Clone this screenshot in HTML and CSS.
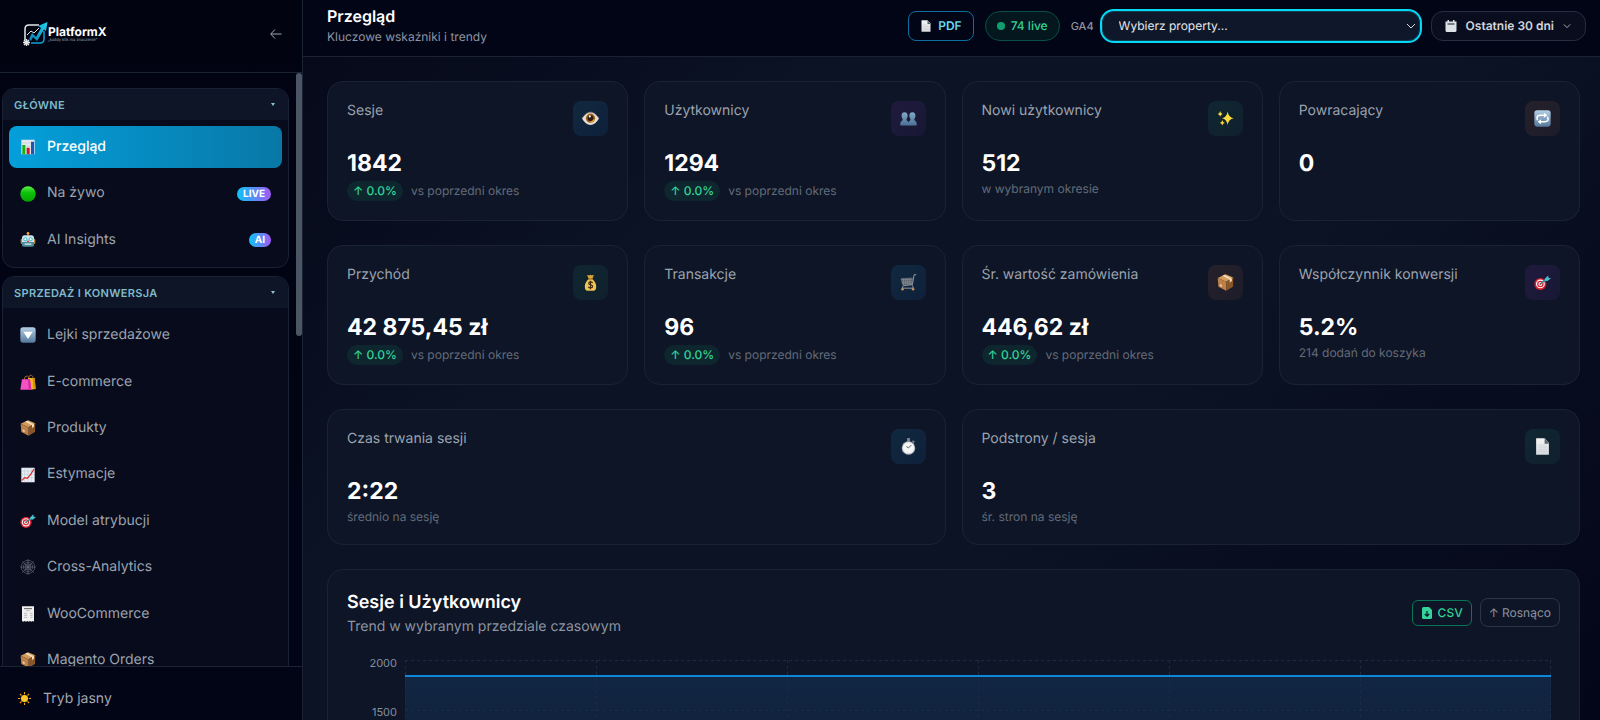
FILE: index.html
```html
<!DOCTYPE html>
<html lang="pl">
<head>
  <meta charset="UTF-8" />
  <meta name="viewport" content="width=device-width, initial-scale=1.0"/>
  <title>PlatformX - Przegląd</title>
  <link rel="stylesheet" href="styles.css">
</head>
<body>

  <!-- ikony -->
  <svg class="sprite" aria-hidden="true">
    <defs>
      <linearGradient id="g-blue" x1="0" y1="0" x2="0" y2="1"><stop offset="0" stop-color="#b4cfe6"/><stop offset="1" stop-color="#54789c"/></linearGradient>
      <linearGradient id="g-green" x1="0" y1="0" x2="0" y2="1"><stop offset="0" stop-color="#5df04a"/><stop offset=".4" stop-color="#0cc40a"/><stop offset="1" stop-color="#04a304"/></linearGradient>
      <linearGradient id="g-bust" x1="0" y1="0" x2="0" y2="1"><stop offset="0" stop-color="#86a9c8"/><stop offset="1" stop-color="#4a7096"/></linearGradient>
      <linearGradient id="g-paper" x1="0" y1="0" x2="0" y2="1"><stop offset="0" stop-color="#f4f4f4"/><stop offset="1" stop-color="#d6dade"/></linearGradient>
      <linearGradient id="g-cyan" x1="0" y1="1" x2="1" y2="0"><stop offset="0" stop-color="#0a7fb8"/><stop offset="1" stop-color="#22d3ee"/></linearGradient>
      <linearGradient id="g-area" x1="0" y1="0" x2="0" y2="1"><stop offset="0" stop-color="#2a8cf0" stop-opacity=".15"/><stop offset="1" stop-color="#2a8cf0" stop-opacity="0"/></linearGradient>
      <symbol id="i-chart" viewBox="0 0 24 24"><path fill="#e3e8ef" d="M2 1h20v22H2z"/><path stroke="#b9c4d0" stroke-width=".7" d="M2 6h20M2 11h20M2 16h20"/><path fill="#13b413" d="M3.500 9h4.500v14H3.500z"/><path fill="#cf1722" d="M10 13h4.500v10H10z"/><path fill="#1b55b8" d="M16.500 4H21v19h-4.500z"/></symbol>
      <symbol id="i-live" viewBox="0 0 24 24"><circle cx="12" cy="12" r="11.500" fill="url(#g-green)"/></symbol>
      <symbol id="i-robot" viewBox="0 0 24 24"><circle cx="12" cy="2" r="2" fill="#f0a83a"/><path fill="#d8793a" d="M11 3h2v4h-2z"/><rect x="1" y="10" width="22" height="8" rx="2" fill="#b8863c"/><path fill="#cfe2e8" d="M3 9q0-4 4-4h10q4 0 4 4v6H3z"/><path fill="#4b8c98" d="M3 15h18v5q0 2-3 2H6q-3 0-3-2z"/><circle cx="8" cy="11" r="3.200" fill="#52c3d6"/><circle cx="16" cy="11" r="3.200" fill="#52c3d6"/><circle cx="8" cy="11" r="1.500" fill="#fff"/><circle cx="16" cy="11" r="1.500" fill="#fff"/><path fill="#dd4438" d="M12 12l2 3h-4z"/><path fill="#b5d4d9" d="M7 17h10v2.500H7z"/></symbol>
      <symbol id="i-down" viewBox="0 0 24 24"><rect x=".5" y=".5" width="23" height="23" rx="4" fill="url(#g-blue)"/><path fill="#fff" d="M5 7h14l-7 11z"/></symbol>
      <symbol id="i-bags" viewBox="0 0 24 24"><path fill="none" stroke="#a96a2a" stroke-width="1.400" d="M13 7q0-6 4-5 3 1 3 5M6 9q1-7 5-6 3 1 3 6"/><path fill="#f5b51d" d="M12 6h10l1.500 16.500-9 1z"/><path fill="#d18c12" d="M19 6h3l1.500 16.500-3 .5z"/><path fill="#f551c4" d="M3 8h12l2 15.500H.5z"/><path fill="#d62a9f" d="M12 8h3l2 15.500h-4z"/></symbol>
      <symbol id="i-box" viewBox="0 0 24 24"><path fill="#d39a5c" d="M12 .5L23 5l-10 6L1 5.500z"/><path fill="#bd8048" d="M1 5.500l12 5.500v12.500L2 18z"/><path fill="#8a5729" d="M23 5l-10 6v12.500L22.500 18z"/><path fill="#f0d9b4" d="M7.500 2.500L18 8v4l3-2V6.500L11 1z"/><path fill="#e9d2b0" d="M4 14l3 1.500v3L4 17z"/></symbol>
      <symbol id="i-trend" viewBox="0 0 24 24"><path fill="#e8edf3" d="M2 1h20v22H2z"/><path stroke="#b4c2d0" stroke-width=".7" d="M2 6h20M2 11h20M2 16h20M7 1v22M12 1v22M17 1v22"/><path fill="none" stroke="#d62a2a" stroke-width="1.800" d="M3 20l4-4 4 1 5-6 5-8"/></symbol>
      <symbol id="i-target" viewBox="0 0 24 24"><circle cx="9" cy="14" r="8.500" fill="#d3202c"/><circle cx="9" cy="14" r="6.200" fill="#fff"/><circle cx="9" cy="14" r="4.600" fill="#d3202c"/><circle cx="9" cy="14" r="2.800" fill="#fff"/><circle cx="9" cy="14" r="1.400" fill="#d3202c"/><path stroke="#2c8ea0" stroke-width="2" d="M9 14l9-7"/><path fill="#4cc0cf" d="M15 7l5-5 .5 3.500 3.500.5-5 4-4-.5z"/></symbol>
      <symbol id="i-web" viewBox="0 0 24 24"><g fill="none" stroke="#697180" stroke-width=".9"><circle cx="12" cy="12" r="10"/><circle cx="12" cy="12" r="7"/><circle cx="12" cy="12" r="4.500"/><circle cx="12" cy="12" r="2"/><path d="M12 0v24M0 12h24M3.500 3.500l17 17M20.500 3.500l-17 17"/></g></symbol>
      <symbol id="i-receipt" viewBox="0 0 24 24"><path fill="#f1f1f1" d="M3 .5h18v23l-2-1-2 1-2-1-2 1-2-1-2 1-2-1-2 1-2-1z"/><path stroke="#555" stroke-width="1.400" d="M6 4h12"/><path stroke="#a5a5a5" d="M9 7h6M6 11h5M15 11h4M6 14h5M15 14h4M6 17h5M15 17h4"/></symbol>
      <symbol id="i-sun" viewBox="0 0 24 24"><g stroke="#f59e0b" stroke-width="2"><path d="M12 0v4M12 20v4M0 12h4M20 12h4M3.500 3.500l3 3M17.500 17.500l3 3M20.500 3.500l-3 3M6.500 17.500l-3 3"/></g><circle cx="12" cy="12" r="6.500" fill="#ffc629"/></symbol>
      <symbol id="i-eye" viewBox="0 0 24 24"><path fill="#e6dedb" d="M0 12q6-9 12-9t12 9q-5 9-12 9T0 12z"/><path fill="none" stroke="#9b7f78" d="M0 12q6-9 12-9t12 9"/><circle cx="12" cy="11.500" r="6.500" fill="#9c5f14"/><path fill="#e0a01e" d="M12 13h6a6 6 0 0 1-6 5z"/><circle cx="12" cy="11.500" r="4" fill="#2e1a12"/><circle cx="11" cy="9" r="1.500" fill="#fff"/></symbol>
      <symbol id="i-users" viewBox="0 0 24 24"><path fill="url(#g-bust)" d="M6.500 3c3 0 4.500 2.300 4.300 5.300-.2 2.500-1.300 3.700-1.600 4.700-.4 2.500 3.300 2.500 3.300 6v3H.5v-3c0-3.500 3.700-3.500 3.300-6-.3-1-1.400-2.200-1.600-4.700C2 5.300 3.500 3 6.500 3z"/><path fill="url(#g-bust)" d="M17.500 3c3 0 4.500 2.300 4.300 5.300-.2 2.500-1.300 3.700-1.600 4.700-.4 2.500 3.300 2.500 3.300 6v3h-12v-3c0-3.500 3.700-3.500 3.300-6-.3-1-1.400-2.200-1.600-4.700C13 5.300 14.500 3 17.500 3z"/></symbol>
      <symbol id="i-sparkles" viewBox="0 0 24 24"><path fill="#fbdc3c" d="M15 2q1 8 8.500 9.500Q16 13 15 21.500 14 13 7 11.500 14 10 15 2zM4.500 1.500q.5 3.500 3.500 4-3 .5-3.500 4Q4 6 1 5.500q3-.5 3.500-4zM7.500 14q.5 3.500 3.500 4-3 .5-3.500 4-.5-3.500-3.500-4 3-.5 3.500-4z"/></symbol>
      <symbol id="i-repeat" viewBox="0 0 24 24"><rect x=".5" y=".5" width="23" height="23" rx="4" fill="url(#g-blue)"/><path fill="none" stroke="#fff" stroke-width="2.200" d="M5 14.500q-3-6.500 4-7h6M19 9.500q3 6.500-4 7H9"/><path fill="#fff" d="M14 4l5 3.500-5 3.500zM10 13l-5 3.500 5 3.500z"/></symbol>
      <symbol id="i-money" viewBox="0 0 24 24"><path fill="#d9a63a" d="M7 1q3 1.500 5 0 2 1.500 5 0l-2.500 6h-5z"/><path fill="#efc452" d="M9.500 7h5q5.500 4.500 5.500 11 0 5.500-4 5.500H8q-4 0-4-5.500Q4 11.500 9.500 7z"/><path stroke="#8a5a20" stroke-width="1.500" d="M9 7h6"/><path fill="none" stroke="#3f2c12" stroke-width="1.700" d="M15 12.500q-1-1.500-3-1.500-2.500 0-2.500 2t2.700 2.300 2.800 2.400q0 2-3 2-2.200 0-3.200-1.700M12 9.500v12"/></symbol>
      <symbol id="i-cart" viewBox="0 0 24 24"><path fill="#596069" d="M1 6l17-1-1 10-14 .5z"/><path stroke="#9aa1aa" stroke-width=".6" d="M1 8h17M2 11h16M3 13h15M5 6v9M8 6v9M11 6v9M14 6v9"/><path fill="none" stroke="#929aa2" stroke-width="1.400" d="M23 1h-3l-2.500 14-13 1.500L3 20h16l-1.500-4"/><circle cx="3.500" cy="21.500" r="1.800" fill="#c58f63"/><circle cx="18.500" cy="21.500" r="1.800" fill="#c58f63"/></symbol>
      <symbol id="i-watch" viewBox="0 0 24 24"><path fill="#7d838a" d="M10 0h4v5h-4zM18 3l3 2-2 2.500-2-2z"/><circle cx="12" cy="14" r="9.500" fill="#b7bcc1"/><circle cx="12" cy="14" r="8" fill="#f5f5f5"/><path stroke="#444" stroke-width="1.200" d="M12 14l4-4M12 14L9 12"/></symbol>
      <symbol id="i-page" viewBox="0 0 24 24"><path fill="url(#g-paper)" d="M3 .5h12L21 7v16.500H3z"/><path fill="#59616a" d="M15 .5L21 8h-6z"/><path stroke="#c4c8cc" stroke-width=".8" d="M6 10h12M6 13h12M6 16h12M6 19h12"/></symbol>
      <symbol id="i-cal" viewBox="0 0 24 24"><path fill="#dde1e6" d="M5 0h3v3h8V0h3v3h4v18q0 3-3 3H4q-3 0-3-3V3h4z"/><path fill="#111827" d="M5 7h14v2H5z"/></symbol>
    </defs>
  </svg>

  <div class="layout">
    <aside class="sidebar">
      <div class="brand">
        <a class="logo" href="#">
          <svg viewBox="0 0 26 26" aria-hidden="true">
            <path fill="none" stroke="#e5e7eb" stroke-width="1.500" d="M17 4H7Q3 4 3 8v11"/>
            <path fill="none" stroke="#0fa0d6" stroke-width="1.500" d="M22 10v8q0 4-4 4H9"/>
            <path fill="none" stroke="#e5e7eb" d="M5 14l4-4 3 2 5-5"/>
            <path fill="url(#g-cyan)" d="M7 18l3-6 4 4 5-9-3-2 9.500-4L24 10l-2-1.500L15 20l-4-4-2 4z"/>
            <path stroke="#e5e7eb" stroke-width="1.400" d="M4.500 18v7M1 21.500h7M2 19l5 5M7 19l-5 5"/>
          </svg>
          <span class="logo-text"><b>PlatformX</b><small>„każdy klik ma znaczenie”</small></span>
        </a>
        <button class="collapse" aria-label="Zwiń menu"><svg viewBox="0 0 12 12"><path d="M11.500 6H1M5 1.500L.7 6 5 10.500"/></svg></button>
      </div>

      <nav class="nav">
        <section class="group">
          <button class="group-head">GŁÓWNE <i></i></button>
          <div class="group-items">
            <a class="active" href="#"><svg><use href="#i-chart"/></svg>Przegląd</a>
            <a href="#"><svg><use href="#i-live"/></svg>Na żywo <em>LIVE</em></a>
            <a href="#"><svg><use href="#i-robot"/></svg>AI Insights <em>AI</em></a>
          </div>
        </section>
        <section class="group">
          <button class="group-head">SPRZEDAŻ I KONWERSJA <i></i></button>
          <div class="group-items">
            <a href="#"><svg><use href="#i-down"/></svg>Lejki sprzedażowe</a>
            <a href="#"><svg><use href="#i-bags"/></svg>E-commerce</a>
            <a href="#"><svg><use href="#i-box"/></svg>Produkty</a>
            <a href="#"><svg><use href="#i-trend"/></svg>Estymacje</a>
            <a href="#"><svg><use href="#i-target"/></svg>Model atrybucji</a>
            <a href="#"><svg><use href="#i-web"/></svg>Cross-Analytics</a>
            <a href="#"><svg><use href="#i-receipt"/></svg>WooCommerce</a>
            <a href="#"><svg><use href="#i-box"/></svg>Magento Orders</a>
          </div>
        </section>
        <span class="thumb"></span>
      </nav>

      <button class="theme"><svg><use href="#i-sun"/></svg>Tryb jasny</button>
    </aside>

    <div class="main">
      <header class="topbar">
        <div class="heading">
          <h1>Przegląd</h1>
          <p>Kluczowe wskaźniki i trendy</p>
        </div>
        <div class="tools">
          <button class="pdf"><svg><use href="#i-page"/></svg>PDF</button>
          <span class="online">74 live</span>
          <div class="property">
            <label for="property">GA4</label>
            <div class="select">
              <select id="property"><option>Wybierz property...</option></select>
              <svg class="chevron" viewBox="0 0 10 10"><path d="M1 3l4 4 4-4"/></svg>
            </div>
          </div>
          <button class="range"><svg><use href="#i-cal"/></svg>Ostatnie 30 dni<svg class="chevron" viewBox="0 0 10 10"><path d="M1 3l4 4 4-4"/></svg></button>
        </div>
      </header>

      <main class="content">
        <div class="cards">
          <article class="card">
            <div class="card-top"><h2>Sesje</h2><span class="icon blue"><svg><use href="#i-eye"/></svg></span></div>
            <strong>1842</strong>
            <p><span class="delta">↑ 0.0%</span>vs poprzedni okres</p>
          </article>
          <article class="card">
            <div class="card-top"><h2>Użytkownicy</h2><span class="icon purple"><svg><use href="#i-users"/></svg></span></div>
            <strong>1294</strong>
            <p><span class="delta">↑ 0.0%</span>vs poprzedni okres</p>
          </article>
          <article class="card">
            <div class="card-top"><h2>Nowi użytkownicy</h2><span class="icon green"><svg><use href="#i-sparkles"/></svg></span></div>
            <strong>512</strong>
            <p>w wybranym okresie</p>
          </article>
          <article class="card">
            <div class="card-top"><h2>Powracający</h2><span class="icon orange"><svg><use href="#i-repeat"/></svg></span></div>
            <strong>0</strong>
          </article>
          <article class="card">
            <div class="card-top"><h2>Przychód</h2><span class="icon green"><svg><use href="#i-money"/></svg></span></div>
            <strong>42 875,45 zł</strong>
            <p><span class="delta">↑ 0.0%</span>vs poprzedni okres</p>
          </article>
          <article class="card">
            <div class="card-top"><h2>Transakcje</h2><span class="icon blue"><svg><use href="#i-cart"/></svg></span></div>
            <strong>96</strong>
            <p><span class="delta">↑ 0.0%</span>vs poprzedni okres</p>
          </article>
          <article class="card">
            <div class="card-top"><h2>Śr. wartość zamówienia</h2><span class="icon orange"><svg><use href="#i-box"/></svg></span></div>
            <strong>446,62 zł</strong>
            <p><span class="delta">↑ 0.0%</span>vs poprzedni okres</p>
          </article>
          <article class="card">
            <div class="card-top"><h2>Współczynnik konwersji</h2><span class="icon purple"><svg><use href="#i-target"/></svg></span></div>
            <strong>5.2%</strong>
            <p>214 dodań do koszyka</p>
          </article>
          <article class="card wide">
            <div class="card-top"><h2>Czas trwania sesji</h2><span class="icon blue"><svg><use href="#i-watch"/></svg></span></div>
            <strong>2:22</strong>
            <p>średnio na sesję</p>
          </article>
          <article class="card wide">
            <div class="card-top"><h2>Podstrony / sesja</h2><span class="icon green"><svg><use href="#i-page"/></svg></span></div>
            <strong>3</strong>
            <p>śr. stron na sesję</p>
          </article>
        </div>

        <section class="panel">
          <div class="panel-head">
            <div>
              <h2>Sesje i Użytkownicy</h2>
              <p>Trend w wybranym przedziale czasowym</p>
            </div>
            <div class="panel-tools">
              <button class="csv"><svg viewBox="0 0 12 12"><path fill="#34d399" d="M2.500 0H8l3 3v7.500Q11 12 9.500 12h-7Q1 12 1 10.500v-9Q1 0 2.500 0z"/><path fill="none" stroke="#0d1526" stroke-width="1.200" d="M6 4v5M3.800 7L6 9.200 8.200 7"/></svg>CSV</button>
              <button class="sort">↑ Rosnąco</button>
            </div>
          </div>
          <div class="chart">
            <div class="axis"><span>2000</span><span>1500</span><span>1000</span><span>500</span><span>0</span></div>
            <svg class="plot" viewBox="0 0 1146 200" preserveAspectRatio="none">
              <path class="area" d="M0 16h1146v184H0z"/>
              <path class="lines" d="M0 .5h1146M0 50.500h1146M0 100.500h1146M0 150.500h1146M.5 0v200M191.500 0v200M382.500 0v200M573.500 0v200M764.500 0v200M955.500 0v200M1145.500 0v200"/>
              <path class="series" d="M0 16h1146"/>
            </svg>
          </div>
        </section>
      </main>
    </div>
  </div>

</body>
</html>
```
FILE: styles.css
```css
* {
  box-sizing: border-box;
}

body {
  margin: 0;
  font-family: Inter, 'Liberation Sans', sans-serif;
  text-rendering: geometricPrecision;
  color: #fff;
  background: #020617;
  overflow: hidden;
}

h1, h2, p {
  margin: 0;
}

button, select {
  font-family: inherit;
  text-rendering: inherit;
  cursor: pointer;
}

a {
  text-decoration: none;
}

.sprite {
  position: absolute;
  width: 0;
  height: 0;
}

.layout {
  display: flex;
  height: 100vh;
}

/* panel boczny */
.sidebar {
  width: 303px;
  flex-shrink: 0;
  display: flex;
  flex-direction: column;
  background: linear-gradient(180deg, #010311, #020516);
  border-right: 1px solid #1a2233;
}

.brand {
  height: 73px;
  flex-shrink: 0;
  display: flex;
  align-items: center;
  justify-content: space-between;
  padding: 0 20px 5px 22px;
  border-bottom: 1px solid #1a2233;
}

.logo {
  display: flex;
  align-items: center;
  color: #fff;
}

.logo svg {
  width: 26px;
  height: 26px;
}

.logo-text b {
  display: block;
  font-size: 12px;
  line-height: 12px;
}

.logo-text small {
  display: block;
  font-size: 4px;
  line-height: 4px;
  color: #9ca3af;
}

.collapse {
  padding: 0;
  border: 0;
  background: none;
  display: flex;
}

.collapse svg {
  width: 12px;
  height: 12px;
  fill: none;
  stroke: #a3a8b3;
}

.nav {
  position: relative;
  flex: 1;
  min-height: 0;
  overflow: hidden;
  padding: 15px 13px 0 2px;
}

/* suwak listy */
.thumb {
  position: absolute;
  top: 0;
  right: 0;
  width: 6px;
  height: 263px;
  border-radius: 3px;
  background: #4b5563;
}

.group {
  border: 1px solid #182234;
  border-radius: 12px;
  background: #070b1c;
  overflow: hidden;
  margin-bottom: 8px;
}

.group-head {
  width: 100%;
  height: 31px;
  display: flex;
  align-items: center;
  justify-content: space-between;
  padding: 0 13px 0 11px;
  border: 0;
  background: #0d1526;
  color: #7fb9cb;
  font-size: 11px;
  font-weight: 600;
  letter-spacing: 0.03em;
}

.group-head i {
  border: 2px solid transparent;
  border-top: 3px solid #8fc4d3;
  border-bottom: 0;
}

.group-items {
  display: flex;
  flex-direction: column;
  gap: 4px;
  padding: 6px;
}

.group-items a {
  display: flex;
  align-items: center;
  gap: 11px;
  padding: 10px 11px;
  border-radius: 8px;
  color: #9ca3af;
  font-size: 14px;
  line-height: 1.6;
}

.group-items svg {
  width: 16px;
  height: 16px;
}

.group-items .active {
  color: #fff;
  font-weight: 500;
  background: linear-gradient(90deg, #049fdb, #0878a6);
}

.group-items em {
  margin-left: auto;
  padding: 0 6px;
  border-radius: 7px;
  background: linear-gradient(90deg, #0cc5f5, #a259f7);
  color: #fff;
  font-size: 10px;
  line-height: 14px;
  font-style: normal;
  font-weight: 700;
}

.theme {
  height: 54px;
  flex-shrink: 0;
  display: flex;
  align-items: center;
  gap: 12px;
  padding: 9px 18px 0;
  border: 0;
  border-top: 1px solid #1a2233;
  background: none;
  color: #a3a8b3;
  font-size: 14px;
}

.theme svg {
  width: 13px;
  height: 13px;
}

/* glowna czesc */
.main {
  flex: 1;
  min-width: 0;
  display: flex;
  flex-direction: column;
  background: linear-gradient(135deg, #050818 0%, #0b1325 30%, #0b1325 60%, #030618 100%);
}

.topbar {
  height: 57px;
  flex-shrink: 0;
  display: flex;
  align-items: center;
  justify-content: space-between;
  padding: 0 14px 5px 24px;
  background: #020515;
  border-bottom: 1px solid #1a2233;
}

.heading {
  padding-top: 3px;
}

.heading h1 {
  font-size: 16px;
  line-height: 20px;
  font-weight: 600;
}

.heading p {
  font-size: 12px;
  line-height: 22px;
  color: #8e94a1;
}

.tools {
  display: flex;
  align-items: center;
  gap: 11px;
}

.tools button, .online {
  height: 30px;
  display: flex;
  align-items: center;
  font-size: 12px;
  font-weight: 600;
}

.tools button svg {
  width: 12px;
  height: 12px;
}

.tools .pdf {
  gap: 6px;
  padding: 0 11px;
  border: 1px solid #0e6f9f;
  border-radius: 8px;
  background: none;
  color: #67d8ef;
}

.online {
  gap: 6px;
  padding: 0 11px;
  border: 1px solid #0a4f45;
  border-radius: 15px;
  background: #04171f;
  color: #34d399;
  font-weight: 500;
}

.online::before {
  content: "";
  width: 8px;
  height: 8px;
  border-radius: 50%;
  background: #0f9f6e;
}

.property {
  display: flex;
  align-items: center;
  gap: 8px;
}

.property label {
  color: #8e94a1;
  font-size: 11px;
  font-weight: 500;
}

.select {
  position: relative;
}

.select select {
  display: block;
  width: 318px;
  height: 30px;
  padding: 0 16px;
  appearance: none;
  border: 1px solid #123c50;
  border-radius: 12px;
  outline: 2px solid #06d8f5;
  background: #0f172a;
  color: #e5e7eb;
  font-size: 12px;
}

.chevron {
  width: 10px;
  height: 10px;
  fill: none;
  stroke: #d1d5db;
  stroke-width: 1;
}

.select .chevron {
  position: absolute;
  top: 10px;
  right: 4px;
}

.tools .range {
  gap: 9px;
  padding: 0 14px 0 13px;
  border: 1px solid #272d40;
  border-radius: 12px;
  background: #090d1e;
  color: #d1d5db;
}

.tools .range .chevron {
  width: 8px;
  height: 8px;
}

.content {
  flex: 1;
  min-height: 0;
  overflow-y: auto;
  scrollbar-width: none;
  padding: 24px 20px 24px 24px;
}

.cards {
  display: grid;
  grid-template-columns: repeat(4, 1fr);
  gap: 24px 16px;
}

.card, .panel {
  border: 1px solid #1a2334;
  border-radius: 16px;
  background: #0d1526;
}

.card {
  padding: 19px;
}

.wide {
  grid-column: span 2;
}

.card-top {
  display: flex;
  align-items: flex-start;
  justify-content: space-between;
  height: 47px;
}

.card h2 {
  color: #9ca3af;
  font-size: 14px;
  line-height: 20px;
  font-weight: 400;
}

.icon {
  width: 35px;
  height: 35px;
  display: flex;
  align-items: center;
  justify-content: center;
  border-radius: 8px;
}

.icon svg {
  width: 17px;
  height: 17px;
}

.blue { background: linear-gradient(135deg, #10293f, #0f203a); }
.purple { background: linear-gradient(135deg, #201a3e, #171834); }
.green { background: linear-gradient(135deg, #0f2731, #10202c); }
.orange { background: linear-gradient(135deg, #26212b, #1c1c2a); }

.card strong {
  display: block;
  font-size: 23px;
  line-height: 30px;
  font-weight: 700;
}

.card p {
  display: flex;
  align-items: center;
  gap: 8px;
  margin-top: 3px;
  color: #646b79;
  font-size: 12px;
  line-height: 16px;
}

.delta {
  padding: 0 6px;
  border-radius: 10px;
  background: #0e272e;
  color: #34d399;
  font-weight: 500;
  line-height: 20px;
}

/* wykres */
.panel {
  margin-top: 24px;
  padding: 19px;
}

.panel-head {
  display: flex;
  align-items: flex-start;
  justify-content: space-between;
}

.panel h2 {
  font-size: 18px;
  line-height: 28px;
  font-weight: 600;
}

.panel p {
  color: #8e94a1;
  font-size: 14px;
  line-height: 20px;
}

.panel-tools {
  display: flex;
  align-items: center;
  gap: 8px;
  padding-top: 9px;
}

.panel-tools button {
  display: flex;
  align-items: center;
  gap: 5px;
  padding: 0 8px;
  background: none;
  font-size: 12px;
}

.panel-tools svg {
  width: 12px;
  height: 12px;
}

.panel-tools .csv {
  height: 26px;
  border: 1px solid #087556;
  border-radius: 6px;
  color: #34d399;
  font-weight: 500;
}

.panel-tools .sort {
  height: 29px;
  border: 1px solid #2d3546;
  border-radius: 8px;
  color: #8e94a1;
}

.chart {
  display: flex;
  gap: 8px;
  padding: 23px 9px 0 0;
}

.axis {
  width: 50px;
  height: 200px;
  display: flex;
  flex-direction: column;
  justify-content: space-between;
  color: #8490a3;
  font-size: 11px;
  line-height: 6px;
  text-align: right;
}

.plot {
  flex: 1;
  min-width: 0;
  height: 200px;
}

.area {
  fill: url(#g-area);
}

.lines {
  fill: none;
  stroke: #1d2a3f;
  stroke-dasharray: 3 3;
}

.series {
  fill: none;
  stroke: #0f87d8;
  stroke-width: 2;
}
```
